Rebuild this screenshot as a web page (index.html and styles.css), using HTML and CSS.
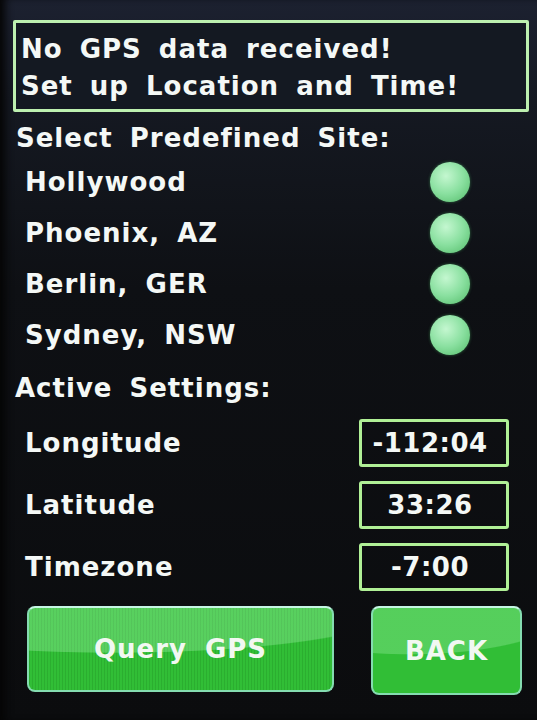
FILE: index.html
```html
<!DOCTYPE html>
<html lang="en">
<head>
  <meta charset="UTF-8">
  <title>GPS Setup</title>
  <link rel="stylesheet" href="styles.css">
</head>
<body>
  <div class="screen">
    <div class="alert">
      <div>No GPS data received!</div>
      <div>Set up Location and Time!</div>
    </div>

    <div class="heading">Select Predefined Site:</div>
    <div class="sites">
      <div class="site"><span>Hollywood</span><span class="dot"></span></div>
      <div class="site"><span>Phoenix, AZ</span><span class="dot"></span></div>
      <div class="site"><span>Berlin, GER</span><span class="dot"></span></div>
      <div class="site"><span>Sydney, NSW</span><span class="dot"></span></div>
    </div>

    <div class="heading heading-active">Active Settings:</div>
    <div class="settings">
      <div class="setting"><span>Longitude</span><span class="value">-112:04</span></div>
      <div class="setting"><span>Latitude</span><span class="value">33:26</span></div>
      <div class="setting"><span>Timezone</span><span class="value">-7:00</span></div>
    </div>

    <div class="buttons">
      <button class="btn btn-query">Query GPS</button>
      <button class="btn btn-back">BACK</button>
    </div>
  </div>
</body>
</html>
```

FILE: styles.css
```css
html, body {
  margin: 0;
  height: 100%;
}

body {
  background: linear-gradient(#1c2130 0, #151922 14%, #0e1014 40%, #0b0c0e 100%);
  color: #f4f8f6;
  font-family: 'DejaVu Sans', 'Liberation Sans', sans-serif;
  font-weight: bold;
  font-size: 26px;
  letter-spacing: 1px;
  word-spacing: 7px;
  box-shadow: inset 9px 0 8px -4px #050505;
}

.screen {
  padding: 20px 8px 0 13px;
}

.alert {
  height: 78px;
  border: 3px solid #bdf0b0;
  border-radius: 2px;
  padding: 8px 4px 0 5px;
  line-height: 37px;
  background-color: #141922;
}

.heading {
  line-height: 30px;
  margin-top: 11px;
  padding-left: 3px;
}

.sites {
  margin-top: 3px;
}

.site {
  height: 51px;
  display: flex;
  justify-content: space-between;
  align-items: center;
  padding-left: 12px;
  padding-right: 59px;
}

.dot {
  width: 40px;
  height: 40px;
  border-radius: 50%;
  background: radial-gradient(circle at 40% 35%, #c4f7d0 0, #8ae0a0 50%, #52bb68 100%);
  box-shadow: 0 0 3px rgba(80, 200, 110, 0.5);
}

.heading-active {
  margin-top: 13px;
  padding-left: 2px;
}

.settings {
  margin-top: 16px;
  display: flex;
  flex-direction: column;
  gap: 14px;
}

.setting {
  height: 48px;
  display: flex;
  justify-content: space-between;
  align-items: center;
  padding-left: 12px;
  padding-right: 20px;
}

.value {
  width: 136px;
  height: 42px;
  padding-right: 8px;
  border: 3px solid #b0f096;
  border-radius: 3px;
  display: flex;
  align-items: center;
  justify-content: center;
  letter-spacing: 0.5px;
}

.buttons {
  margin-top: 15px;
  display: flex;
  align-items: flex-start;
  gap: 37px;
  padding-left: 14px;
}

.btn {
  font-family: inherit;
  font-weight: bold;
  font-size: 26px;
  letter-spacing: 1px;
  word-spacing: 8px;
  color: #f2f8f2;
  border: 2px solid #84dcb0;
  border-top-color: #c6f6e4;
  border-radius: 8px;
  background-color: #31be36;
  background-image:
    radial-gradient(ellipse 95% 55% at 28% 0%, rgba(190, 255, 200, 0.28) 98%, transparent 100%),
    repeating-linear-gradient(90deg, rgba(0, 60, 0, 0.12) 0 1px, transparent 1px 3px);
  padding: 0;
}

.btn-query {
  width: 307px;
  height: 86px;
}

.btn-back {
  width: 151px;
  height: 89px;
  background-image:
    radial-gradient(ellipse 110% 55% at 25% 0%, rgba(190, 255, 200, 0.26) 98%, transparent 100%);
}
```
